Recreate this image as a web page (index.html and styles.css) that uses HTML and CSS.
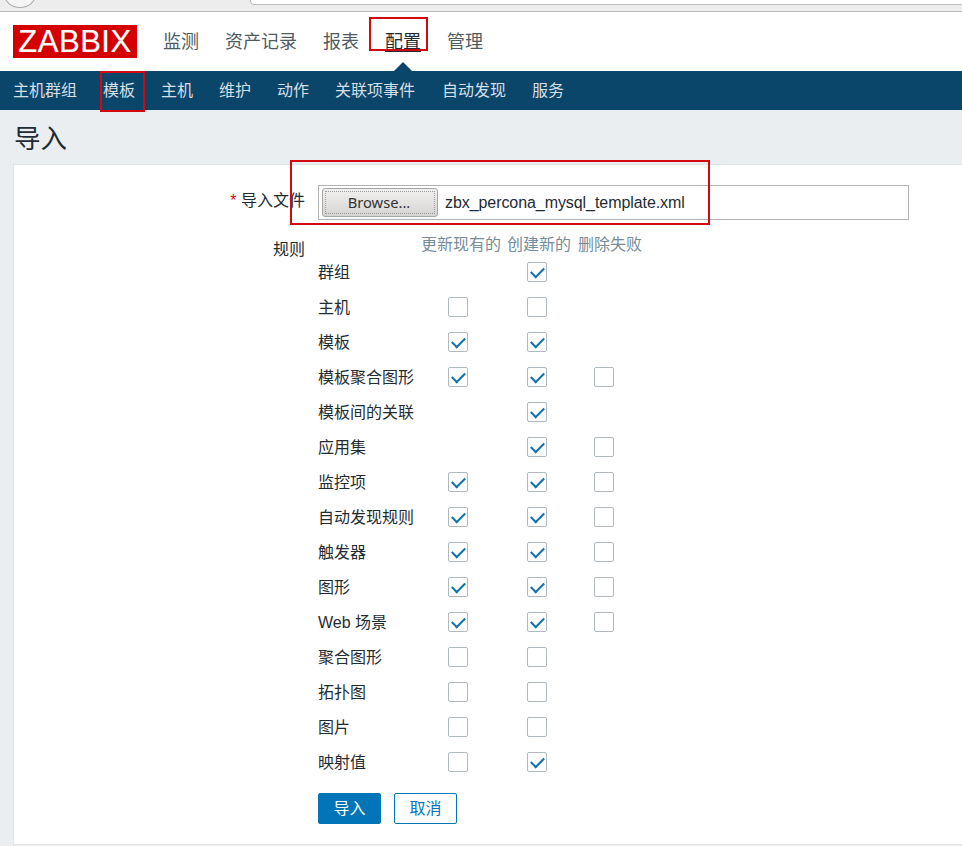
FILE: index.html
```html
<!DOCTYPE html>
<html lang="zh-CN">
<head>
<meta charset="utf-8">
<title>导入</title>
<link rel="stylesheet" href="styles.css">
</head>
<body>
<div class="chrome"><span class="chrome-btn"></span><span class="chrome-url"></span></div>
<header class="topbar">
  <div class="logo">ZABBIX</div>
  <nav class="mainnav">
    <a>监测</a><a>资产记录</a><a>报表</a><a class="active">配置</a><a>管理</a>
  </nav>
  <span class="mark mark-config"></span>
</header>
<nav class="subnav">
  <a>主机群组</a><a>模板</a><a>主机</a><a>维护</a><a>动作</a><a class="wide">关联项事件</a><a>自动发现</a><a>服务</a>
  <span class="mark mark-template"></span>
</nav>
<main class="page">
  <h1 class="title">导入</h1>
  <section class="panel">
    <span class="mark mark-file"></span>
    <div class="file-row">
      <div class="form-label"><span class="req">*</span> 导入文件</div>
      <div class="file-input"><span class="browse"><span class="browse-inner">Browse...</span></span><span class="file-name">zbx_percona_mysql_template.xml</span></div>
    </div>
    <div class="rules">
      <div class="form-label rules-label">规则</div>
      <div class="rules-body">
        <div class="rules-head"><span>更新现有的</span><span>创建新的</span><span>删除失败</span></div>
        <div class="rule"><span>群组</span><i></i><i class="cb on"></i><i></i></div>
        <div class="rule"><span>主机</span><i class="cb"></i><i class="cb"></i><i></i></div>
        <div class="rule"><span>模板</span><i class="cb on"></i><i class="cb on"></i><i></i></div>
        <div class="rule"><span>模板聚合图形</span><i class="cb on"></i><i class="cb on"></i><i class="cb"></i></div>
        <div class="rule"><span>模板间的关联</span><i></i><i class="cb on"></i><i></i></div>
        <div class="rule"><span>应用集</span><i></i><i class="cb on"></i><i class="cb"></i></div>
        <div class="rule"><span>监控项</span><i class="cb on"></i><i class="cb on"></i><i class="cb"></i></div>
        <div class="rule"><span>自动发现规则</span><i class="cb on"></i><i class="cb on"></i><i class="cb"></i></div>
        <div class="rule"><span>触发器</span><i class="cb on"></i><i class="cb on"></i><i class="cb"></i></div>
        <div class="rule"><span>图形</span><i class="cb on"></i><i class="cb on"></i><i class="cb"></i></div>
        <div class="rule"><span>Web 场景</span><i class="cb on"></i><i class="cb on"></i><i class="cb"></i></div>
        <div class="rule"><span>聚合图形</span><i class="cb"></i><i class="cb"></i><i></i></div>
        <div class="rule"><span>拓扑图</span><i class="cb"></i><i class="cb"></i><i></i></div>
        <div class="rule"><span>图片</span><i class="cb"></i><i class="cb"></i><i></i></div>
        <div class="rule"><span>映射值</span><i class="cb"></i><i class="cb on"></i><i></i></div>
        <div class="actions"><button class="btn primary">导入</button><button class="btn ghost">取消</button></div>
      </div>
    </div>
  </section>
</main>
</body>
</html>
```
FILE: styles.css
```css
* { box-sizing: border-box; }
html, body { margin: 0; height: 846px; overflow: hidden; }
body {
  width: 962px;
  background: #ebeef0;
  color: #1f2c33;
  font: 16px/1.2 "Liberation Sans", "Noto Sans CJK SC", sans-serif;
}
.chrome {
  height: 12px;
  background: #ededed;
  border-bottom: 1px solid #b8b8b8;
  position: relative;
  overflow: hidden;
}
.chrome-btn {
  position: absolute; left: 4px; top: -20px;
  width: 32px; height: 28px;
  border: 1px solid #aaa; border-radius: 50%;
  background: #f6f6f6;
}
.chrome-url {
  position: absolute; left: 250px; top: -10px;
  width: 740px; height: 15px;
  background: #fff; border: 1px solid #bbb; border-radius: 4px;
}
.topbar {
  height: 59px;
  background: #fff;
  display: flex;
  align-items: flex-start;
  padding: 13px 0 0 13px;
  position: relative;
}
.logo {
  width: 124px; height: 33px;
  background: #d40000;
  color: #fff;
  font-size: 31px;
  line-height: 33px;
  letter-spacing: 0.5px;
  text-align: center;
  -webkit-text-stroke: 0.2px #fff;
}
.mainnav {
  display: flex;
  gap: 26px;
  margin-left: 26px;
  font-size: 18px;
  line-height: 30px;
  color: #4f5b63;
  padding-top: 2px;
}
.mainnav a.active { color: #1f2c33; position: relative; border-bottom: 1px solid #1f2c33; height: 25px; }
.mainnav a.active::after {
  content: "";
  position: absolute; left: 8px; bottom: -21px;
  border: 10px solid transparent;
  border-top: 0;
  border-bottom: 10px solid #0a466a;
}
.subnav {
  height: 39px;
  background: #0a466a;
  display: flex;
  gap: 26px;
  padding-left: 13px;
  align-items: center;
  color: #d5dfe6;
  position: relative;
}
.wide { margin-right: 1px; }
.mark { position: absolute; border: 2px solid #d4090f; pointer-events: none; }
.mark-config { left: 369px; top: 5px; width: 59px; height: 34px; }
.mark-template { left: 100px; top: 0; width: 45px; height: 41px; }
.mark-file { left: 276px; top: -5px; width: 420px; height: 65px; z-index: 2; }
.page { height: 736px; }
.title {
  margin: 0;
  height: 54px;
  padding: 12px 0 0 14px;
  font-size: 26.5px;
  line-height: 34px;
  font-weight: 400;
  color: #1f2c33;
}
.panel {
  margin-left: 13px;
  height: 681px;
  background: #fff;
  border: 1px solid #dfe4e7;
  border-right: 0;
  position: relative;
  padding-top: 20px;
}
.file-row, .rules { display: flex; align-items: flex-start; }
.form-label { width: 291px; text-align: right; padding-top: 6px; line-height: 20px; }
.req { color: #d4090f; }
.file-input {
  margin-left: 13px;
  width: 591px; height: 35px;
  border: 1px solid #b4b4b4;
  display: flex;
  align-items: center;
  padding-left: 3px;
}
.browse {
  width: 116px; height: 29px;
  background: linear-gradient(#f1f1f0, #d6d4d2);
  border: 1px solid #a6a6a6;
  border-radius: 3px;
  padding: 2px;
  display: flex;
  flex: none;
}
.browse-inner {
  flex: 1;
  border: 1px dotted #999;
  padding-right: 2px;
  font: 14.7px/21px "Noto Sans", sans-serif;
  color: #333;
  text-align: center;
}
.file-name { margin-left: 7px; color: #1f2c33; letter-spacing: -0.07px; }
.rules { margin-top: 20px; }
.rules-label { padding-top: 0; }
.rules-body { margin-left: 13px; margin-top: -5px; }
.rules-head { display: flex; gap: 6px; margin-left: 103px; color: #768d99; height: 19px; line-height: 20px; }
.rules-head span:last-child { margin-left: 1px; }
.rule {
  display: grid;
  grid-template-columns: 130px 79px 67px 20px;
  align-items: center;
  height: 35px;
}
.rule span { padding-top: 2px; }
.rule i { display: block; width: 20px; height: 20px; }
.cb {
  border: 1px solid #b0b9be;
  border-radius: 2px;
  background: #fff;
  position: relative;
}
.cb.on::after {
  content: "";
  position: absolute; left: 3px; top: 4px;
  width: 11px; height: 6px;
  border-left: 2px solid #0f73ae;
  border-bottom: 2px solid #0f73ae;
  transform: rotate(-45deg);
}
.actions { display: flex; gap: 13px; margin-top: 14px; }
.btn {
  width: 63px; height: 31px;
  font: inherit;
  border-radius: 2px;
  border: 1px solid #0275b8;
  padding: 0;
}
.primary { background: #0275b8; color: #fff; }
.ghost { background: #fff; color: #0275b8; }
```
